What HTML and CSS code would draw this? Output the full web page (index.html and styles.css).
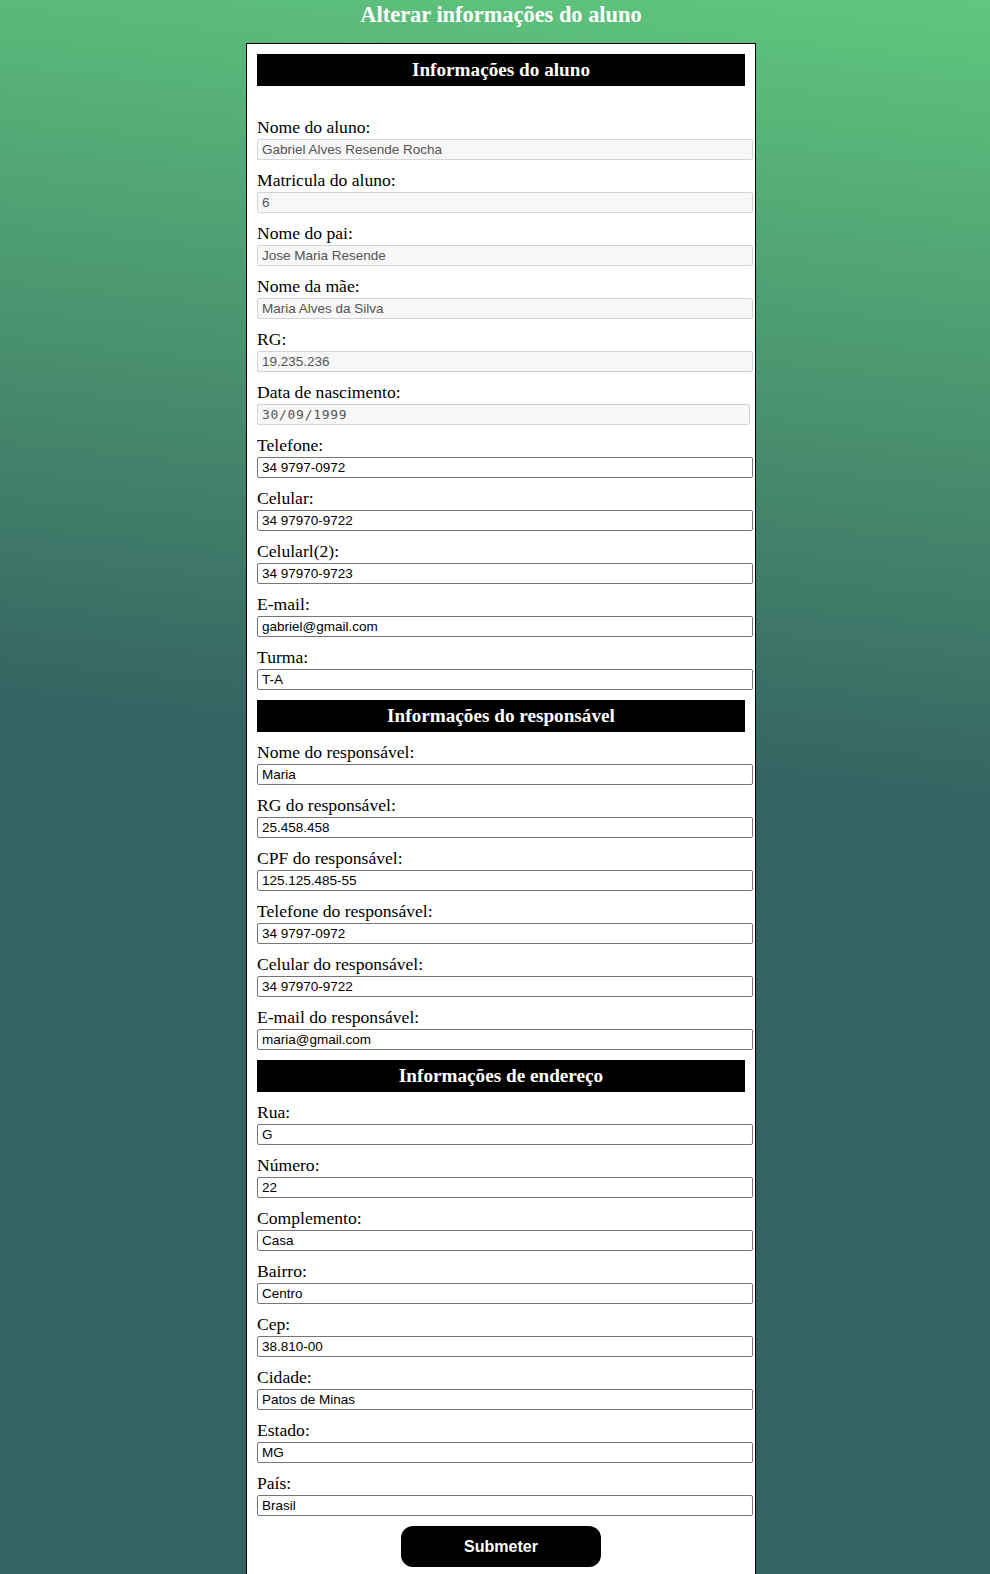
FILE: index.html
```html
<!DOCTYPE html>
<html lang="pt-BR">
<head>
<meta charset="utf-8">
<title>Alterar informações do aluno</title>
<link rel="stylesheet" href="styles.css">
</head>
<body>
<h1 class="page-title">Alterar informações do aluno</h1>
<form class="card">
  <h2 class="section-title section-title--first">Informações do aluno</h2>
  <div class="field"><label for="nome">Nome do aluno:</label><input class="input" id="nome" type="text" value="Gabriel Alves Resende Rocha" disabled></div>
  <div class="field"><label for="matricula">Matricula do aluno:</label><input class="input" id="matricula" type="text" value="6" disabled></div>
  <div class="field"><label for="pai">Nome do pai:</label><input class="input" id="pai" type="text" value="Jose Maria Resende" disabled></div>
  <div class="field"><label for="mae">Nome da mãe:</label><input class="input" id="mae" type="text" value="Maria Alves da Silva" disabled></div>
  <div class="field"><label for="rg">RG:</label><input class="input" id="rg" type="text" value="19.235.236" disabled></div>
  <div class="field"><label for="nasc">Data de nascimento:</label><input class="input input--date" id="nasc" type="text" value="30/09/1999" disabled></div>
  <div class="field"><label for="tel">Telefone:</label><input class="input" id="tel" type="text" value="34 9797-0972"></div>
  <div class="field"><label for="cel">Celular:</label><input class="input" id="cel" type="text" value="34 97970-9722"></div>
  <div class="field"><label for="cel2">Celularl(2):</label><input class="input" id="cel2" type="text" value="34 97970-9723"></div>
  <div class="field"><label for="email">E-mail:</label><input class="input" id="email" type="text" value="gabriel@gmail.com"></div>
  <div class="field"><label for="turma">Turma:</label><input class="input" id="turma" type="text" value="T-A"></div>

  <h2 class="section-title">Informações do responsável</h2>
  <div class="field"><label for="rnome">Nome do responsável:</label><input class="input" id="rnome" type="text" value="Maria"></div>
  <div class="field"><label for="rrg">RG do responsável:</label><input class="input" id="rrg" type="text" value="25.458.458"></div>
  <div class="field"><label for="rcpf">CPF do responsável:</label><input class="input" id="rcpf" type="text" value="125.125.485-55"></div>
  <div class="field"><label for="rtel">Telefone do responsável:</label><input class="input" id="rtel" type="text" value="34 9797-0972"></div>
  <div class="field"><label for="rcel">Celular do responsável:</label><input class="input" id="rcel" type="text" value="34 97970-9722"></div>
  <div class="field"><label for="remail">E-mail do responsável:</label><input class="input" id="remail" type="text" value="maria@gmail.com"></div>

  <h2 class="section-title">Informações de endereço</h2>
  <div class="field"><label for="rua">Rua:</label><input class="input" id="rua" type="text" value="G"></div>
  <div class="field"><label for="numero">Número:</label><input class="input" id="numero" type="text" value="22"></div>
  <div class="field"><label for="comp">Complemento:</label><input class="input" id="comp" type="text" value="Casa"></div>
  <div class="field"><label for="bairro">Bairro:</label><input class="input" id="bairro" type="text" value="Centro"></div>
  <div class="field"><label for="cep">Cep:</label><input class="input" id="cep" type="text" value="38.810-00"></div>
  <div class="field"><label for="cidade">Cidade:</label><input class="input" id="cidade" type="text" value="Patos de Minas"></div>
  <div class="field"><label for="estado">Estado:</label><input class="input" id="estado" type="text" value="MG"></div>
  <div class="field"><label for="pais">País:</label><input class="input" id="pais" type="text" value="Brasil"></div>

  <button class="submit" type="submit">Submeter</button>
</form>
</body>
</html>
```
FILE: styles.css
```css
html {
  background: linear-gradient(186deg, #60c77d 0px, #356262 810px) no-repeat, #356262;
}

body {
  margin: 0 0 0 12px;
  font-family: "Liberation Serif", "Times New Roman", serif;
  color: #000;
}

.page-title {
  margin: 0;
  padding-top: 2px;
  font-size: 22.4px;
  line-height: 26px;
  font-weight: bold;
  color: #fff;
  text-align: center;
}

.card {
  width: 488px;
  margin: 15px auto 0;
  padding: 10px;
  border: 1px solid #000;
  background: #fff;
  display: flex;
  flex-direction: column;
  gap: 10px;
}

.section-title {
  margin: 0;
  height: 32px;
  background: #000;
  color: #fff;
  font-size: 19.2px;
  line-height: 32px;
  font-weight: bold;
  text-align: center;
}

.section-title--first {
  margin-bottom: 21px;
}

.field {
  display: flex;
  flex-direction: column;
  align-items: flex-start;
}

.field label {
  font-size: 17.6px;
  line-height: 20px;
  padding-bottom: 2px;
}

.input {
  box-sizing: border-box;
  width: calc(100% + 8px);
  height: 21px;
  margin: 0;
  padding: 0 3px 0 4px;
  border: 1px solid #767676;
  border-radius: 2px;
  background: #fff;
  color: #000;
  font-family: "Liberation Sans", Arial, sans-serif;
  font-size: 13.5px;
  line-height: 15px;
}

.input:disabled {
  background: #f7f7f7;
  border-color: #d4d4d4;
  color: #545454;
}

.input--date {
  width: calc(100% + 5px);
  font-family: "DejaVu Sans Mono", "Liberation Mono", monospace;
  font-size: 13px;
  letter-spacing: 0.7px;
  color: #6a6a6a;
}

.submit {
  align-self: center;
  width: 200px;
  height: 41px;
  margin: 0;
  padding: 0;
  border: none;
  border-radius: 12px;
  background: #000;
  color: #fff;
  font-family: "Liberation Sans", Arial, sans-serif;
  font-size: 16px;
  font-weight: bold;
}
```
